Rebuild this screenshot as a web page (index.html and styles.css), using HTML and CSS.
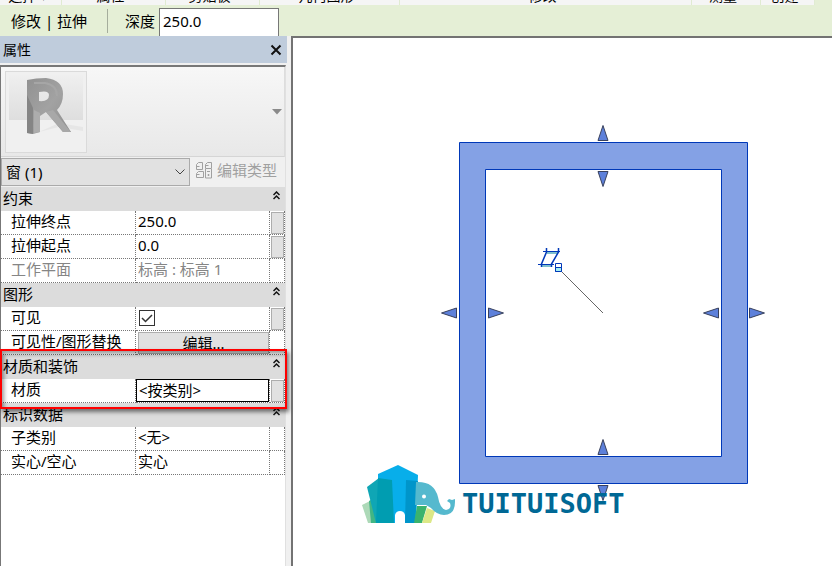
FILE: index.html
```html
<!DOCTYPE html>
<html lang="zh-CN">
<head>
<meta charset="utf-8">
<title>属性</title>
<link rel="stylesheet" href="styles.css">
</head>
<body>
<div class="ribbon">
  <span>选择 ▾</span><span>属性</span><span>剪贴板</span><span>几何图形</span><span>修改</span><span>测量</span><span>创建</span><i></i>
</div>
<header class="options">
  <span class="mode">修改 | 拉伸</span>
  <label for="depth">深度</label>
  <input id="depth" type="text" value="250.0">
</header>
<main class="workspace">
  <section class="palette">
    <div class="title">
      <h1>属性</h1>
      <button type="button" aria-label="关闭"><svg width="12" height="12" viewBox="0 0 12 12"><path d="M1.5 1.5l9 9M10.5 1.5l-9 9" fill="none" stroke="#111" stroke-width="2"/></svg></button>
    </div>
    <div class="body">
      <button type="button" class="preview" aria-label="类型选择器">
        <svg class="thumb" width="82" height="82" viewBox="0 0 82 82">
          <defs>
            <linearGradient id="wall" x2="0" y2="1"><stop offset="0" stop-color="#efefef"/><stop offset="1" stop-color="#dedede"/></linearGradient>
            <linearGradient id="front" x2="1" y2="1"><stop offset="0" stop-color="#919191"/><stop offset=".5" stop-color="#a2a2a2"/><stop offset="1" stop-color="#8c8c8c"/></linearGradient>
          </defs>
          <rect x=".5" y=".5" width="81" height="81" fill="#f0f0f0" stroke="#dadada"/>
          <path d="M4 4h74v45L4 49z" fill="url(#wall)"/>
          <path d="M34 61l20-9 24 4v4l-24-4z" fill="#e6e6e6"/>
          <path d="M22 9q9-2 19-2 17 2 17 16 0 10-6 16l14 22h-8L41 41l-6 4v16l-7 2-6-1zM34 21v9q10 1 10-6 0-5-10-3z" fill="url(#front)" fill-rule="evenodd"/>
          <path d="M22 24l6 13v26l-6-1z" fill="#858585"/>
          <path d="M29 39l6 3v19l-6 1z" fill="#adadad"/>
          <path d="M41 41l7-2 18 22h-8z" fill="#a8a8a8"/>
          <path d="M29 12h11q12 2 12 13" fill="none" stroke="#a6a6a6" stroke-width="2"/>
        </svg>
        <svg width="10" height="6" viewBox="0 0 10 6"><path d="M0 0h10L5 5.500z" fill="#8a8a8a"/></svg>
      </button>
      <div class="typebar">
        <select aria-label="类型"><option>窗 (1)</option></select>
        <button type="button" class="edit-type" disabled>
          <svg width="17" height="17" viewBox="0 0 17 17" fill="none" stroke="#a0a0a0"><path d="M.5 7.500v-5l2-2h4v7zM.5 4.500h3M9.500 6V2.500l2-2h4V6M9.500 3.500h3M.5 15.500v-4l2-2h5v6zM.5 12.500h3M9.500 6.500h6v9.500h-6zM11 9.500h3M11.500 13h2M12.500 12v2"/></svg>
          <span>编辑类型</span>
        </button>
      </div>
      <table>
        <colgroup><col><col class="c-value"><col class="c-more"></colgroup>
        <tbody>
          <tr class="group"><th colspan="3"><div>约束<button type="button" aria-label="折叠约束"><svg width="7" height="9" viewBox="0 0 7 9"><path d="M.5 4l3-3 3 3M.5 8l3-3 3 3"/></svg></button></div></th></tr>
          <tr><th scope="row">拉伸终点</th><td>250.0</td><td><button type="button" class="more" aria-label="关联参数"></button></td></tr>
          <tr><th scope="row">拉伸起点</th><td>0.0</td><td><button type="button" class="more" aria-label="关联参数"></button></td></tr>
          <tr class="off"><th scope="row">工作平面</th><td>标高 : 标高 1</td><td></td></tr>
        </tbody>
        <tbody>
          <tr class="group"><th colspan="3"><div>图形<button type="button" aria-label="折叠图形"><svg width="7" height="9" viewBox="0 0 7 9"><path d="M.5 4l3-3 3 3M.5 8l3-3 3 3"/></svg></button></div></th></tr>
          <tr><th scope="row"><label for="visible">可见</label></th><td><input id="visible" type="checkbox" checked></td><td><button type="button" class="more" aria-label="关联参数"></button></td></tr>
          <tr><th scope="row">可见性/图形替换</th><td><button type="button" class="edit">编辑...</button></td><td></td></tr>
        </tbody>
        <tbody class="marked">
          <tr class="group"><th colspan="3"><div>材质和装饰<button type="button" aria-label="折叠材质和装饰"><svg width="7" height="9" viewBox="0 0 7 9"><path d="M.5 4l3-3 3 3M.5 8l3-3 3 3"/></svg></button></div></th></tr>
          <tr><th scope="row"><label for="material">材质</label></th><td><input id="material" class="material" type="text" value="&lt;按类别&gt;"></td><td><button type="button" class="more" aria-label="关联参数"></button></td></tr>
        </tbody>
        <tbody>
          <tr class="group"><th colspan="3"><div>标识数据<button type="button" aria-label="折叠标识数据"><svg width="7" height="9" viewBox="0 0 7 9"><path d="M.5 4l3-3 3 3M.5 8l3-3 3 3"/></svg></button></div></th></tr>
          <tr><th scope="row">子类别</th><td>&lt;无&gt;</td><td></td></tr>
          <tr><th scope="row">实心/空心</th><td>实心</td><td></td></tr>
        </tbody>
      </table>
    </div>
  </section>
  <section class="canvas">
    <svg width="539" height="528" viewBox="293 38 539 528">
      <path d="M459.500 142.500h288v341h-288zM485.500 169.500v287h236v-287z" fill="#84a1e5" fill-rule="evenodd" stroke="#0038b8"/>
      <g fill="#5d80da" stroke="#39415c">
        <path d="M603 125.500l5 15h-10zM603 186.500l5-15h-10zM603 439.500l5 15h-10zM603 500.500l5-15h-10z"/>
        <path d="M441.500 313l15-5v10zM503.500 313l-15-5v10zM703.500 313l15-5v10zM764.500 313l-15-5v10z"/>
      </g>
      <path d="M561 271l42 42" stroke="#666"/>
      <path d="M547 253h11M541 266h11" stroke="#7fc0cf" stroke-width="2" fill="none"/>
      <path d="M543 251.500h17M538 264.500h16" fill="none" stroke="#0038b8"/>
      <path d="M546.500 248v4l-5 12v3M558.500 248v4l-7 12v3" fill="none" stroke="#0038b8" stroke-width="1.500"/>
      <path d="M555.500 263.500h6v8h-6z" fill="#fff" stroke="#0038b8"/>
      <path d="M555.500 267.500h6v4h-6z" fill="#a4f0f5" stroke="#0038b8"/>
      <g>
        <path d="M362 505l14-7 4 25h-12z" fill="#add9b8"/>
        <path d="M369 501l7-4 3 26h-8z" fill="#42b684"/>
        <path d="M367 487l12-9 15 2v43h-18z" fill="#0fa6b5"/>
        <path d="M378 474l20-9 20 10-2 48H378z" fill="#08aeea"/>
        <path d="M378 478l14 2 2 43h-18z" fill="#009db1"/>
        <path d="M406 480l12 1-3 42h-10z" fill="#0095ca"/>
        <path d="M417 506h10l-5 17h-8z" fill="#3bb36d"/>
        <path d="M427 508l8 3-4 12h-9z" fill="#dce887"/>
        <path d="M416 482q18-1 22 15 2 12 8 13 6-1 4-7l-3-2 2-2 3 1 3-1v3q0 13-11 13-7 0-13-7l-5-3h-11z" fill="#55b9ce"/>
        <circle cx="424" cy="496.500" r="2" fill="#fff"/>
        <path d="M395 523v-8q1-4 5-4t5 4v8z" fill="#fff"/>
      </g>
      <text class="wordmark" x="462" y="513">TUITUISOFT</text>
    </svg>
  </section>
</main>
</body>
</html>
```
FILE: styles.css
```css
* { box-sizing: border-box; }

body {
  margin: 0;
  min-height: 100vh;
  display: flex;
  flex-direction: column;
  overflow: hidden;
  background: #f0f0f0;
  color: #000;
  font: 15px/24px "Noto Sans", "Noto Sans CJK SC", sans-serif;
}

button, input, select { font: inherit; color: inherit; margin: 0; padding: 0; }
svg { display: block; flex: none; }

/* The ribbon is scrolled up so that only the foot of its panel titles shows. */
.ribbon {
  display: grid;
  grid-template-columns: 62px 104px 94px 140px 292px 69px 54px 1fr;
  height: 5px;
  overflow: hidden;
  background: #f5f5f5;
  font-size: 14px;
  line-height: 18px;
  text-align: center;
  align-content: end;
}
.ribbon span { height: 18px; padding-right: 6px; border-right: 1px solid #e0ebd2; }
.ribbon i { background: #e5efd6; }

.options {
  display: flex;
  align-items: center;
  height: 31px;
  padding-left: 11px;
  background: #e5efd6;
}
.mode { width: 97px; border-right: 1px solid #a5ad9c; }
.options label { width: 51px; padding-left: 17px; white-space: nowrap; }
.options input {
  width: 120px;
  height: 28px;
  align-self: flex-end;
  padding: 0 3px 4px;
  border: 1px solid #777;
  border-bottom: 0;
  background: #fff;
}

.workspace { flex: 1; display: flex; }

.palette { width: 287px; flex: none; display: flex; flex-direction: column; }
.title {
  display: flex;
  align-items: center;
  justify-content: space-between;
  height: 27px;
  padding: 0 5px 0 3px;
  background: #bfccdc;
}
.title h1 { margin: 0; font-size: 14px; font-weight: 400; }
.title button { border: 0; background: none; }
.body {
  flex: 1;
  margin: 2px 1px 0 0;
  border-top: 2px solid #777;
  border-left: 1px solid #777;
  border-right: 1px solid #e0e0e0;
  background: #fff;
}

.preview {
  display: flex;
  align-items: center;
  justify-content: space-between;
  width: 100%;
  height: 90px;
  padding: 0 2px 0 4px;
  border: 0;
  border-right: 1px solid #ddd;
  border-bottom: 1px solid #d5d5d5;
  background: linear-gradient(#f7f7f7, #e8e8e8);
}

.typebar { display: flex; height: 30px; padding-top: 1px; background: #f0f0f0; }
.typebar select {
  width: 189px;
  height: 28px;
  padding: 0 4px;
  appearance: none;
  border: 1px solid #aaa;
  border-radius: 0;
  background: #e1e1e1 url("data:image/svg+xml,%3Csvg xmlns='http://www.w3.org/2000/svg' width='10' height='6'%3E%3Cpath d='M.5.5L5 5 9.500.5' fill='none' stroke='%23444'/%3E%3C/svg%3E") no-repeat right 4px center;
}
.edit-type {
  display: flex;
  align-items: center;
  gap: 4px;
  height: 24px;
  padding-left: 6px;
  border: 0;
  background: none;
  color: #a0a0a0;
  white-space: nowrap;
}

table { width: 100%; table-layout: fixed; border-collapse: separate; border-spacing: 0; }
.c-value { width: 134px; }
.c-more { width: 15px; }
tr { height: 24px; }
th, td {
  height: 24px;
  padding: 0 0 2px;
  border-right: 1px dotted #777;
  border-bottom: 1px dotted #777;
  font-weight: 400;
  text-align: left;
  line-height: 21px;
  white-space: nowrap;
}
th { padding-left: 10px; }
td:nth-child(2) { padding-left: 2px; }
td:has(button, input) { padding-bottom: 0; }
.off { color: #858585; }
.group th { padding: 0; border: 0; background: #dcdcdc; }
.group div { display: flex; align-items: flex-start; justify-content: space-between; height: 24px; padding: 0 5px 0 2px; line-height: 22px; }
.group button { padding: 4px 0; border: 0; background: none; }
.group path { fill: none; stroke: #111; stroke-width: 1.500; }

.more {
  display: block;
  width: 13px;
  height: 22px;
  margin-left: 1px;
  border: 1px solid #adadad;
  background: #e1e1e1;
}
input[type="checkbox"] {
  display: block;
  appearance: none;
  width: 16px;
  height: 16px;
  margin: 0 0 2px 1px;
  border: 1px solid #333;
  background: #fff url("data:image/svg+xml,%3Csvg xmlns='http://www.w3.org/2000/svg' width='14' height='14'%3E%3Cpath d='M2 7l3.500 3.500L12 4' fill='none' stroke='%23333' stroke-width='1.500'/%3E%3C/svg%3E");
}
.edit {
  display: block;
  width: 131px;
  height: 22px;
  line-height: 20px;
  border: 1px solid #adadad;
  background: #e1e1e1;
}
.marked td:nth-child(2) { padding-left: 0; }
.material {
  display: block;
  width: 133px;
  height: 23px;
  padding: 0 2px 2px;
  border: 1px solid #000;
  background: #fff;
}
.marked { position: relative; }
.marked::after {
  content: "";
  position: absolute;
  inset: -6px -2px -6px -1px;
  border: 2px solid #f00;
  box-shadow: 2px 3px 4px rgba(0, 0, 0, .5), inset 2px 3px 4px rgba(0, 0, 0, .4);
  pointer-events: none;
}

.canvas {
  flex: 1;
  min-width: 0;
  margin-left: 4px;
  border-top: 2px solid #737373;
  border-left: 2px solid #737373;
  background: #fff;
}
.wordmark { font: bold 27px "DejaVu Sans Mono", monospace; fill: #006895; }
```
